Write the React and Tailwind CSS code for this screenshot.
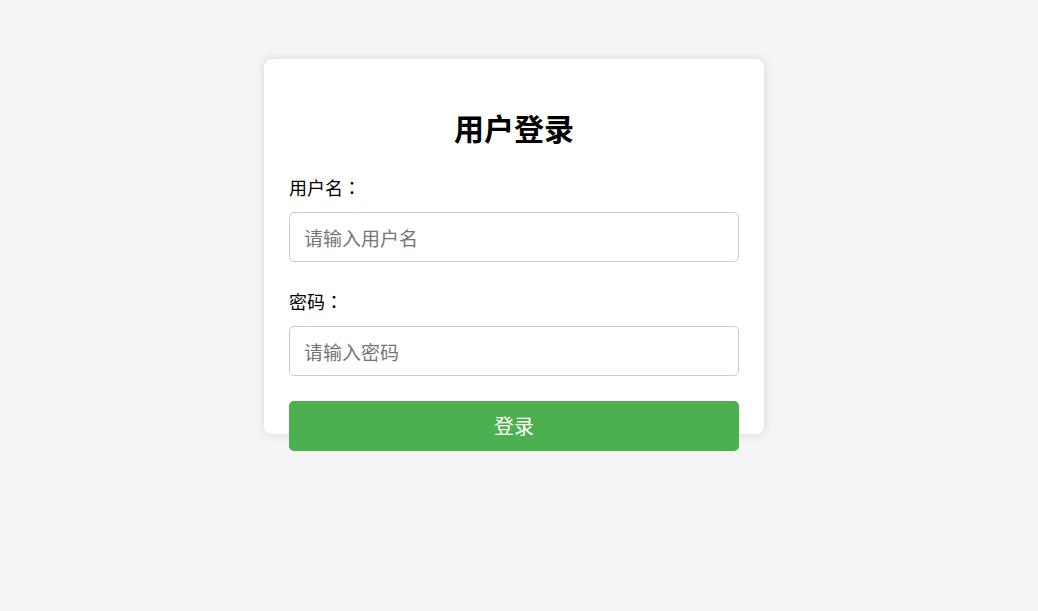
export default function App() {
  const font = { fontFamily: '"Noto Sans CJK SC", "Noto Sans", sans-serif' };
  const colon = { fontFamily: '"Noto Sans CJK TC", "Noto Sans CJK SC", sans-serif' };
  return (
    <div className="min-h-[611px] w-full bg-[#f4f4f4] pt-[59px] pr-[10px] flex justify-center" style={font}>
      <div className="w-[500px] h-[375px] bg-white rounded-[8px] shadow-[0_0_10px_rgba(0,0,0,0.12)] pt-[50px] px-[25px]">
        <h2 className="text-center text-[30px] leading-[36px] font-bold text-black mb-[29px]">用户登录</h2>
        <label className="block text-[18px] leading-[27px] text-black mb-[11px]">
          用户名<span style={colon}>：</span>
        </label>
        <input
          type="text"
          placeholder="请输入用户名"
          className="block w-full h-[50px] border border-[#ccc] rounded-[5px] px-[14px] text-[19px] text-black placeholder:text-[#757575] outline-none"
        />
        <label className="block text-[18px] leading-[27px] text-black mt-[26px] mb-[11px]">
          密码<span style={colon}>：</span>
        </label>
        <input
          type="password"
          placeholder="请输入密码"
          className="block w-full h-[50px] border border-[#ccc] rounded-[5px] px-[14px] text-[19px] text-black placeholder:text-[#757575] outline-none"
        />
        <button className="block w-full h-[50px] mt-[25px] bg-[#4caf50] rounded-[5px] text-white text-[20px]">登录</button>
      </div>
    </div>
  );
}
